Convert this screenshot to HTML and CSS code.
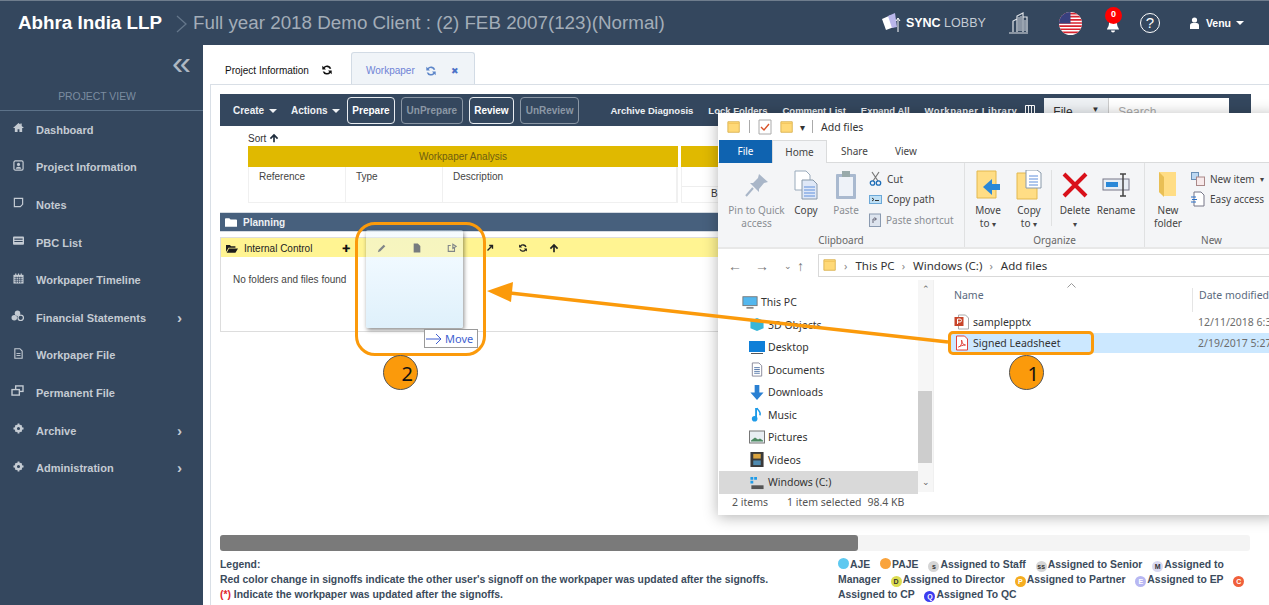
FILE: index.html
```html
<!DOCTYPE html>
<html lang="en">
<head>
<meta charset="utf-8">
<title>Workpaper</title>
<link rel="stylesheet" href="styles.css">
</head>
<body>
<svg width="0" height="0" class="defs">
  <defs>
    <symbol id="i-refresh" viewBox="0 0 12 12"><path d="M10.3 4.6A4.5 4.5 0 0 0 2.6 3L1.3 1.8v3.6h3.6L3.7 4.1a3 3 0 0 1 5 .9zM1.7 7.4a4.5 4.5 0 0 0 7.7 1.6l1.3 1.2V6.6H7.100l1.200 1.300a3 3 0 0 1-5-.5z" fill="currentColor"/></symbol>
    <symbol id="i-up" viewBox="0 0 12 12"><path d="M6 1l5 5-1.400 1.400L7 4.900V11H5V4.900L2.400 7.400 1 6z" fill="currentColor"/></symbol>
    <symbol id="i-gear" viewBox="0 0 12 12"><circle cx="6" cy="6" r="3" fill="none" stroke="currentColor" stroke-width="2.600"/><path d="M5 .5h2v2.500H5zM5 9h2v2.500H5zM.5 5H3v2H.5zM9 5h2.500v2H9zM2 3.400L3.400 2l1.500 1.500-1.400 1.400zM8.600 10L10 8.600 8.500 7.100 7.100 8.500zM10 3.400L8.600 2 7.100 3.500l1.400 1.400zM3.400 10L2 8.600l1.500-1.500 1.400 1.400z" fill="currentColor"/></symbol>
    <symbol id="i-folder" viewBox="0 0 16 16"><path d="M1 2h13v12H1z" fill="#ffd977" stroke="#d9b04e"/><path d="M1 4h13" stroke="#f2c55c"/></symbol>
  </defs>
</svg>

<header class="topbar">
  <span class="brand">Abhra India LLP</span>
  <svg class="crumb" width="14" height="20" viewBox="0 0 14 20"><path d="M2 2l9 8-9 8" fill="none" stroke="#64768a" stroke-width="1.300"/></svg>
  <span class="client">Full year 2018 Demo Client : (2) FEB 2007(123)(Normal)</span>
  <div class="top-tools">
    <svg class="sync-icon" width="24" height="22" viewBox="0 0 24 22"><path d="M1 7l9-4 3 12-8 3z" fill="#fff"/><path d="M7 4l7-3 2 14-5 1z" fill="#b9b6ea"/><path d="M17 20V7m-2 2l2-3 2 3" stroke="#fff" fill="none"/></svg>
    <span class="sync"><b>SYNC</b> LOBBY</span>
    <svg class="building" width="21" height="22" viewBox="0 0 21 22"><path d="M9 20V4l6-3v19M15 5h4v15M5 20V9l4-2M1 21h19" fill="none" stroke="#dfe3e8" stroke-width="1.200"/><path d="M11 5v14M13 4v15M17 8v11" stroke="#dfe3e8"/></svg>
    <svg class="flag" width="23" height="23" viewBox="0 0 22 22"><clipPath id="round"><circle cx="11" cy="11" r="11"/></clipPath><g clip-path="url(#round)"><rect width="22" height="22" fill="#fff"/><path d="M0 1.500h22M0 4.500h22M0 7.500h22M0 10.500h22M0 13.500h22M0 16.500h22M0 19.500h22" stroke="#d8232f" stroke-width="1.600"/><rect width="11" height="11" fill="#38407e"/></g></svg>
    <div class="bell">
      <svg width="14" height="15" viewBox="0 0 14 15"><path d="M7 1a4 4 0 0 1 4 4c0 4 2 5 2 6.500H1C1 10 3 9 3 5a4 4 0 0 1 4-4zM5 12.500h4a2 2 0 0 1-4 0z" fill="#fff"/></svg>
      <span class="badge">0</span>
    </div>
    <span class="help">?</span>
    <svg class="person" width="9" height="12" viewBox="0 0 9 12"><circle cx="4.500" cy="3" r="2.600" fill="#fff"/><path d="M0 12V8.500a2.500 2.500 0 0 1 2.500-2.500h4A2.500 2.500 0 0 1 9 8.500V12z" fill="#fff"/></svg>
    <span class="user">Venu</span>
    <span class="caret user-caret"></span>
  </div>
</header>

<div class="shell">
  <aside class="sidebar">
    <div class="collapse">«</div>
    <div class="side-title">PROJECT VIEW</div>
    <nav class="side-nav">
      <a class="side-item"><svg class="s-ic" viewBox="0 0 12 12"><path d="M6 1L0 6.500h2V11h3V8h2v3h3V6.500h2L9.500 4.300V1.500H8v1.300z" fill="currentColor"/></svg><span>Dashboard</span></a>
      <a class="side-item"><svg class="s-ic" viewBox="0 0 12 12"><rect x="1" y="1" width="10" height="10" rx="1.500" fill="none" stroke="currentColor" stroke-width="1.300"/><circle cx="6" cy="4.800" r="1.700" fill="currentColor"/><path d="M3 9.500c0-3 6-3 6 0z" fill="currentColor"/></svg><span>Project Information</span></a>
      <a class="side-item"><svg class="s-ic" viewBox="0 0 12 12"><path d="M1.500 1.500h9V8L8 10.500H1.500z" fill="none" stroke="currentColor" stroke-width="1.300"/></svg><span>Notes</span></a>
      <a class="side-item"><svg class="s-ic" viewBox="0 0 12 12"><rect x="0" y="1.500" width="12" height="9" rx="1" fill="currentColor"/><path d="M1.500 4.500h9M1.500 7h9" stroke="#34475e" stroke-width="1.100"/></svg><span>PBC List</span></a>
      <a class="side-item"><svg class="s-ic" viewBox="0 0 12 12"><rect x=".5" y="2" width="11" height="9.500" fill="currentColor"/><path d="M3 .5v2M6 .5v2M9 .5v2" stroke="currentColor" stroke-width="1.300"/><path d="M1.500 5h9M1.500 7h9M1.500 9h9M3.500 4v7M6 4v7M8.500 4v7" stroke="#34475e" stroke-width=".7"/></svg><span>Workpaper Timeline</span></a>
      <a class="side-item has-sub"><svg class="s-ic wide" viewBox="0 0 14 12"><circle cx="7" cy="3.500" r="3" fill="currentColor"/><circle cx="3.500" cy="8.500" r="3" fill="currentColor"/><circle cx="10.500" cy="8.500" r="3" fill="none" stroke="currentColor" stroke-width="1.400"/></svg><span>Financial Statements</span><em class="chev">›</em></a>
      <a class="side-item"><svg class="s-ic" viewBox="0 0 12 12"><path d="M2 .8h5.500L10 3.300v7.900H2z" fill="none" stroke="currentColor" stroke-width="1.200"/><path d="M3.800 6h4.400M3.800 8.200h4.400" stroke="currentColor"/></svg><span>Workpaper File</span></a>
      <a class="side-item"><svg class="s-ic wide" viewBox="0 0 14 12"><rect x="5" y="1" width="8" height="6" fill="none" stroke="currentColor" stroke-width="1.500"/><rect x="1" y="5" width="8" height="6" fill="#34475e" stroke="currentColor" stroke-width="1.500"/></svg><span>Permanent File</span></a>
      <a class="side-item has-sub"><svg class="s-ic"><use href="#i-gear"/></svg><span>Archive</span><em class="chev">›</em></a>
      <a class="side-item has-sub"><svg class="s-ic"><use href="#i-gear"/></svg><span>Administration</span><em class="chev">›</em></a>
    </nav>
  </aside>

  <main class="content">
    <div class="tabs">
      <div class="tab">Project Information <svg class="t-ic"><use href="#i-refresh"/></svg></div>
      <div class="tab active">Workpaper <svg class="t-ic"><use href="#i-refresh"/></svg><span class="close">✖</span></div>
    </div>
    <section class="panel">
      <div class="toolbar">
        <span class="tool-link dd">Create <i class="caret"></i></span>
        <span class="tool-link dd">Actions <i class="caret"></i></span>
        <button class="btn">Prepare</button>
        <button class="btn off">UnPrepare</button>
        <button class="btn">Review</button>
        <button class="btn off">UnReview</button>
        <div class="tool-right">
          <span class="tool-link">Archive Diagnosis</span>
          <span class="tool-link">Lock Folders</span>
          <span class="tool-link">Comment List</span>
          <span class="tool-link">Expand All</span>
          <span class="tool-link lib">Workpaper Library</span>
          <svg class="col-ic" width="10" height="10" viewBox="0 0 10 10"><path d="M.5.500h9v9h-9zM3.500.500v9M6.500.500v9" fill="none" stroke="#fff"/></svg>
          <div class="search"><span class="file-sel">File <i>▼</i></span><span class="search-box">Search</span></div>
        </div>
      </div>

      <div class="sort">Sort <svg class="sort-ic"><use href="#i-up"/></svg></div>
      <div class="analysis">
        <div class="a-table main-table">
          <div class="a-head">Workpaper Analysis</div>
          <div class="a-cols">
            <span>Reference</span><span>Type</span><span>Description</span>
          </div>
        </div>
        <div class="a-table side-table">
          <div class="a-head"></div>
          <div class="a-sub"></div>
          <div class="a-sub2">B</div>
        </div>
      </div>

      <div class="planning"><svg class="f-ic" viewBox="0 0 14 12"><path d="M0 2a1 1 0 0 1 1-1h4l1.500 1.500H13a1 1 0 0 1 1 1V11H0z" fill="#fff"/></svg>Planning</div>
      <div class="tree-box">
        <div class="control">
          <svg class="f-ic open" viewBox="0 0 14 12"><path d="M0 2h4.500L6 3.500h5V5H3L0 10zM3.500 6H14l-3 5H.8z" fill="#1d1d1d"/></svg>
          <span class="control-name">Internal Control</span>
          <span class="plus">✚</span>
          <svg class="c-ic" viewBox="0 0 12 12"><path d="M2 8l6-6 2 2-6 6-3 1z" fill="#333"/></svg>
          <svg class="c-ic" viewBox="0 0 12 12"><path d="M2 .5h5l3 3v8H2z" fill="#222"/></svg>
          <svg class="c-ic" viewBox="0 0 12 12"><path d="M9 6v4H1.500V3h3M7 1.500l4 2.500-4 2.500z" fill="none" stroke="#333" stroke-width="1.300"/></svg>
          <svg class="c-ic c-go" viewBox="0 0 12 12"><path d="M3 9l5-5M5 3h4v4" fill="none" stroke="#222" stroke-width="1.600"/></svg>
          <svg class="c-ic c-sync"><use href="#i-refresh"/></svg>
          <svg class="c-ic c-top"><use href="#i-up"/></svg>
        </div>
        <p class="empty">No folders and files found</p>
      </div>

      <div class="spacer"></div>
      <div class="hscroll"><div class="hthumb"></div></div>
      <footer class="legend">
        <div class="legend-text">
          <p>Legend:</p>
          <p>Red color change in signoffs indicate the other user's signoff on the workpaper was updated after the signoffs.</p>
          <p><span class="red">(*)</span> Indicate the workpaper was updated after the signoffs.</p>
        </div>
        <div class="legend-keys">
          <i class="dot aje"></i>AJE <i class="dot paje"></i>PAJE <i class="dot staff">s</i>Assigned to Staff <i class="dot senior">ss</i>Assigned to Senior <i class="dot mgr">M</i>Assigned to Manager <i class="dot dir">D</i>Assigned to Director <i class="dot partner">P</i>Assigned to Partner <i class="dot ep">E</i>Assigned to EP <i class="dot cp">C</i>Assigned to CP <i class="dot qc">Q</i>Assigned To QC
        </div>
      </footer>
    </section>
  </main>
</div>

<div class="explorer">
  <div class="ex-title">
    <svg class="ex-ic"><use href="#i-folder"/></svg>
    <i class="ex-sep"></i>
    <svg class="ex-ic" viewBox="0 0 14 16"><path d="M1 1h12v14H1z" fill="#fff" stroke="#aaa"/><path d="M3 8l3 3 5-6" fill="none" stroke="#d9542b" stroke-width="1.400"/></svg>
    <svg class="ex-ic"><use href="#i-folder"/></svg>
    <span class="ex-down">▾</span>
    <i class="ex-sep"></i>
    <span>Add files</span>
  </div>
  <div class="ex-tabs">
    <span class="ex-tab file">File</span><span class="ex-tab home">Home</span><span class="ex-tab">Share</span><span class="ex-tab">View</span>
  </div>
  <div class="ribbon">
    <div class="r-group clip">
      <div class="r-items">
        <div class="r-big pin dim"><svg width="26" height="26" viewBox="0 0 26 26"><path d="M15 2l9 8-4 1-5 6 0 3-9-9 3 0 5-5z" fill="#a9b6c8"/><path d="M9 16l-7 8" stroke="#a9b6c8" stroke-width="2"/></svg><span>Pin to Quick access</span></div>
        <div class="r-big copy"><svg width="26" height="30" viewBox="0 0 26 30"><path d="M2 1h11l4 4v15H2z" fill="#fff" stroke="#9ab"/><path d="M9 10h11l4 4v15H9z" fill="#dfe8f7" stroke="#89a"/><path d="M11 17h11M11 20h11M11 23h11M11 26h11" stroke="#5f8fdc"/></svg><span>Copy</span></div>
        <div class="r-big paste dim"><svg width="22" height="30" viewBox="0 0 22 30"><rect x="1" y="4" width="20" height="25" rx="1" fill="#a9b9cf"/><rect x="4" y="7" width="14" height="19" fill="#eef2f8"/><rect x="7" y="1" width="8" height="6" fill="#9aa"/></svg><span>Paste</span></div>
        <div class="r-small-col">
          <div class="r-small"><svg width="13" height="15" viewBox="0 0 13 15"><path d="M3 1l6 9M10 1L4 10" stroke="#777" stroke-width="1.200"/><circle cx="3.500" cy="12" r="2.200" fill="none" stroke="#1f6fb8" stroke-width="1.300"/><circle cx="9.500" cy="12" r="2.200" fill="none" stroke="#1f6fb8" stroke-width="1.300"/></svg>Cut</div>
          <div class="r-small"><svg width="13" height="9" viewBox="0 0 13 9"><rect x=".5" y=".5" width="12" height="8" fill="#bfe0f5" stroke="#6ba8d8"/><path d="M3 3l2 1.500L3 6M6 5.500h4" stroke="#333" fill="none"/></svg>Copy path</div>
          <div class="r-small dim"><svg width="12" height="15" viewBox="0 0 12 15"><rect x=".5" y="2" width="11" height="12.500" fill="#dde4ee" stroke="#8a9ab0"/><path d="M4 11V7h3M5.500 5.500L7.500 7l-2 1.500" stroke="#667" fill="none"/></svg>Paste shortcut</div>
        </div>
      </div>
      <div class="r-label">Clipboard</div>
    </div>
    <div class="r-group org">
      <div class="r-items">
        <div class="r-big move"><svg width="26" height="30" viewBox="0 0 26 30"><path d="M2 1h19v27H2z" fill="#ffdd85" stroke="#e3b84f"/><path d="M25 14v6h-8v5l-9-8 9-8v5z" fill="#2a88d8"/></svg><span>Move<br>to <i class="mini">▾</i></span></div>
        <div class="r-big cop"><svg width="26" height="30" viewBox="0 0 26 30"><path d="M1 3h20v26H1z" fill="#ffdd85" stroke="#e3b84f"/><path d="M10 0h11l4 3v15H10z" fill="#fff" stroke="#89a"/><path d="M13 6h9M13 9h9M13 12h9M13 15h9" stroke="#5f8fdc"/></svg><span>Copy<br>to <i class="mini">▾</i></span></div>
        <i class="r-div"></i>
        <div class="r-big del"><svg width="26" height="26" viewBox="0 0 26 26"><path d="M2 2l22 22M24 2L2 24" stroke="#d9101a" stroke-width="4"/></svg><span>Delete<br><i class="mini">▾</i></span></div>
        <div class="r-big ren"><svg width="28" height="26" viewBox="0 0 28 26"><rect x="1" y="7" width="26" height="11" fill="#e8eef5" stroke="#778"/><rect x="4" y="10" width="12" height="5" fill="#2a88d8"/><path d="M21 2v22M18 2h6M18 24h6" stroke="#444" stroke-width="1.500"/></svg><span>Rename</span></div>
      </div>
      <div class="r-label">Organize</div>
    </div>
    <div class="r-group new">
      <div class="r-items">
        <div class="r-big nf"><svg width="20" height="28" viewBox="0 0 20 28"><path d="M1 1h17v24H6l-5-4z" fill="#ffdd85"/><path d="M1 1l5 5v20l-5-5z" fill="#e9bf55"/></svg><span>New<br>folder</span></div>
        <div class="r-small-col">
          <div class="r-small"><svg width="14" height="14" viewBox="0 0 14 14"><rect x=".5" y=".5" width="7" height="7" fill="#bcd8f2" stroke="#6a8fb5"/><rect x="5.500" y="5" width="8" height="8.500" fill="#f7e9ea" stroke="#a88"/></svg>New item <i class="mini">▾</i></div>
          <div class="r-small"><svg width="14" height="16" viewBox="0 0 14 16"><path d="M3 1h7l3 3v11H3z" fill="#fff" stroke="#778"/><path d="M0 6h5M1 8.500h5M0 11h5" stroke="#2a70c8"/></svg>Easy access <i class="mini">▾</i></div>
        </div>
      </div>
      <div class="r-label">New</div>
    </div>
  </div>
  <div class="ex-addr">
    <span class="nav-ic">←</span><span class="nav-ic">→</span><span class="nav-ic tiny">⌄</span><span class="nav-ic">↑</span>
    <div class="addr-box">
      <svg class="ex-ic"><use href="#i-folder"/></svg>
      <span class="gt">›</span>This PC<span class="gt">›</span>Windows (C:)<span class="gt">›</span>Add files
    </div>
  </div>
  <div class="ex-body">
    <div class="ex-tree">
      <div class="t-row pc"><svg width="18" height="15" viewBox="0 0 18 15"><rect x="1" y="1" width="16" height="10" fill="#53b7ee" stroke="#777"/><path d="M5 13.500h8" stroke="#888" stroke-width="2"/></svg>This PC</div>
      <div class="t-row"><svg width="16" height="16" viewBox="0 0 16 16"><path d="M8 1l7 3v8l-7 3-7-3V4z" fill="#37b6d8"/></svg>3D Objects</div>
      <div class="t-row"><svg width="16" height="13" viewBox="0 0 16 13"><rect width="16" height="11" fill="#0f7fd8"/><path d="M2 12.500h12" stroke="#555"/></svg>Desktop</div>
      <div class="t-row"><svg width="16" height="16" viewBox="0 0 16 16"><path d="M3 1h7l3 3v11H3z" fill="#fff" stroke="#889"/><path d="M5 6h6M5 8h6M5 10h6M5 12h6" stroke="#57a"/></svg>Documents</div>
      <div class="t-row"><svg width="16" height="16" viewBox="0 0 16 16"><path d="M5.500 0h5v8H15l-7 8-7-8h4.500z" fill="#2a80d2"/></svg>Downloads</div>
      <div class="t-row"><svg width="16" height="16" viewBox="0 0 16 16"><path d="M7 1v11" stroke="#1e9be8" stroke-width="2"/><circle cx="5.500" cy="12.500" r="3" fill="#1e9be8"/><path d="M8 1c1 3 5 4 3 8" stroke="#1e9be8" fill="none" stroke-width="1.500"/></svg>Music</div>
      <div class="t-row"><svg width="16" height="14" viewBox="0 0 16 14"><rect x=".5" y=".5" width="15" height="12" fill="#e9eef3" stroke="#777"/><path d="M2 10l4-3 3 2 2-1 3 2v1H2z" fill="#4e8a63"/></svg>Pictures</div>
      <div class="t-row"><svg width="14" height="16" viewBox="0 0 14 16"><rect width="14" height="16" fill="#3a3a3a"/><rect x="3" y="2" width="8" height="5" fill="#d9a33e"/><rect x="3" y="9" width="8" height="5" fill="#4e8ab0"/></svg>Videos</div>
      <div class="t-row sel"><svg width="16" height="16" viewBox="0 0 16 16"><path d="M1 2h3v3H1zM5 2h3v3H5zM1 6h3v3H1z" fill="#1e9be8"/><rect x="2" y="11" width="13" height="4" fill="#555"/></svg>Windows (C:)</div>
    </div>
    <div class="ex-scroll"><span class="sc-a">⌃</span><div class="sc-thumb"></div><span class="sc-a">⌄</span></div>
    <div class="ex-list">
      <div class="l-head"><span class="l-name">Name<svg class="sort-mark" width="9" height="5" viewBox="0 0 9 5"><path d="M.5 4.500l4-4 4 4" fill="none" stroke="#999"/></svg></span><span class="l-date">Date modified</span></div>
      <div class="l-row"><svg width="15" height="16" viewBox="0 0 15 16"><path d="M4 1h7l3 3v11H4z" fill="#fff" stroke="#aaa"/><rect y="3" width="9" height="9" fill="#c8452a"/><path d="M3 10V5h2.500a1.300 1.300 0 0 1 0 3H3" fill="none" stroke="#fff"/></svg><span class="l-name-t">samplepptx</span><span class="l-d">12/11/2018 6:37</span></div>
      <div class="l-row picked"><svg width="13" height="16" viewBox="0 0 13 16"><path d="M1 1h8l3 3v11H1z" fill="#fff" stroke="#e0413a"/><path d="M3 12c3-1 4-5 3-7 0 3 2 5 4 5-3 0-5 1-7 2z" fill="none" stroke="#e0413a"/></svg><span class="l-name-t">Signed Leadsheet</span><span class="l-d">2/19/2017 5:27</span></div>
    </div>
  </div>
  <div class="ex-status"><span>2 items</span><span class="st-sel">1 item selected</span><span>98.4 KB</span></div>
</div>

<div class="ghost"></div>
<div class="move-tag"><svg width="16" height="12" viewBox="0 0 16 12"><path d="M0 6h15M10 1l5 5-5 5" fill="none" stroke="#3f5fd0"/></svg>Move</div>
<div class="callout box-two"></div>
<div class="callout box-one"></div>
<svg class="arrow" width="1269" height="605" viewBox="0 0 1269 605">
  <path d="M948 342L510 293" fill="none" stroke="#fb9a0b" stroke-width="3.500"/>
  <path d="M487 291l26-9-2 20z" fill="#fb9a0b"/>
</svg>
<div class="step step-one">1</div>
<div class="step step-two">2</div>
</body>
</html>
```

FILE: styles.css
```css
* { box-sizing: border-box; }
html, body { margin: 0; height: 100%; }
body {
  width: 1269px; height: 605px; overflow: hidden; position: relative;
  display: flex; flex-direction: column;
  font-family: "Liberation Sans", Arial, sans-serif; background: #fff;
}
.defs { position: absolute; }
p { margin: 0; }

.topbar {
  height: 45px; flex: none; display: flex; align-items: center;
  padding-left: 18px; background: #34475e; border-top: 1px solid #6f7d8d;
}
.brand { color: #fff; font-size: 18.800px; font-weight: 700; white-space: nowrap; }
.crumb { margin: 2px 4px 0 13px; flex: none; }
.client { color: #a3adb8; font-size: 18.800px; white-space: nowrap; }
.top-tools { margin-left: auto; display: flex; align-items: center; color: #fff; padding-right: 25px; }
.sync-icon { margin-right: 1px; }
.sync { font-size: 12.500px; color: #c5ccd5; width: 80px; white-space: nowrap; }
.sync b { color: #fff; font-weight: 700; }
.building { margin-left: 22px; }
.flag { margin-left: 30px; }
.bell { position: relative; margin-left: 24px; width: 14px; height: 15px; }
.bell svg { display: block; margin-top: 2px; }
.badge {
  position: absolute; left: -1px; top: -9px; width: 17px; height: 17px; border-radius: 50%;
  background: #f00; color: #fff; font-size: 9px; font-weight: 700; text-align: center; line-height: 15px;
}
.help {
  margin-left: 20px; width: 20px; height: 20px; border: 1.500px solid #fff; border-radius: 50%;
  font-size: 15px; line-height: 18px; text-align: center;
}
.person { margin-left: 30px; margin-right: 7px; }
.user { font-size: 10.500px; font-weight: 700; }
.caret { display: inline-block; width: 0; height: 0; border: 4px solid transparent; border-top-color: currentColor; border-bottom: 0; vertical-align: middle; }
.user-caret { margin-left: 5px; }

.shell { flex: 1; display: flex; min-height: 0; }
.sidebar { width: 203px; flex: none; background: #34475e; color: #c4cbd3; }
.collapse { height: 30px; margin-top: 2px; padding-right: 12px; text-align: right; font-size: 34px; line-height: 30px; color: #aeb8c3; font-weight: 400; }
.side-title { height: 34px; padding: 14px 9px 0 0; text-align: center; font-size: 10.400px; color: #7b8ca0; border-bottom: 1px solid #5c7289; }
.side-item { height: 37.600px; display: flex; align-items: center; padding-left: 13px; font-size: 11px; font-weight: 700; }
.s-ic { width: 11px; height: 11px; margin-right: 12px; flex: none; margin-top: -4px; color: #c4cbd3; }
.s-ic.wide { width: 13px; margin-left: -2px; }
.side-item span { white-space: nowrap; }
.chev { font-style: normal; margin-left: auto; margin-right: 21px; font-size: 15px; line-height: 12px; }

.content { flex: 1; min-width: 0; padding: 7px 18px 0 7px; display: flex; flex-direction: column; }
.tabs { height: 32px; flex: none; display: flex; position: relative; z-index: 1; }
.tab { display: flex; align-items: center; font-size: 10px; color: #111; padding: 4px 15px 0; width: 141px; gap: 12px; white-space: nowrap; }
.tab.active { width: 124px; color: #6f83d6; background: #f0f4f8; border: 1px solid #d2dbe5; border-bottom: 0; border-radius: 3px 3px 0 0; padding-left: 14px; gap: 10px; }
.t-ic { width: 12px; height: 12px; flex: none; }
.tab.active .t-ic { color: #5d86c9; }
.close { color: #4d72c8; font-size: 9px; margin-left: 4px; }

.panel { flex: 1; min-height: 0; border: 1px solid #d9dfe6; border-bottom: 0; border-right: 0; padding: 9px 0 0 9px; display: flex; flex-direction: column; margin-right: -18px; }
.toolbar { height: 32px; width: 1031px; flex: none; background: #34475e; display: flex; align-items: center; padding-left: 13px; color: #fff; font-size: 10px; }
.tool-link { font-weight: 700; white-space: nowrap; color: #eef1f4; }
.tool-link.dd { margin-right: 14px; }
.tool-link.dd + .tool-link.dd { margin-right: 7px; }
.tool-link.dd .caret { margin-left: 2px; }
.tool-link.lib { letter-spacing: .5px; }
.btn {
  font: 700 10px "Liberation Sans", Arial, sans-serif; color: #fff; background: transparent;
  border: 1.500px solid #e8ecf0; border-radius: 4px; height: 27px; padding: 0 4px; margin-right: 6px; white-space: nowrap;
}
.btn.off { color: #8b97a5; border-color: #8a96a4; padding: 0 5px; }
.tool-right { margin-left: 25px; display: flex; align-items: center; gap: 15px; flex: 1; min-width: 0; padding-right: 24px; font-size: 9.500px; }
.col-ic { margin: 0 -6px 0 -7px; flex: none; }
.search { display: flex; margin-left: auto; height: 28px; margin-top: 4px; align-self: flex-start; flex: none; }
.file-sel { width: 65px; background: #eef1f4; color: #333; padding: 7px 9px; font-size: 12px; display: flex; justify-content: space-between; border-right: 1px solid #ccc; }
.file-sel i { font-style: normal; font-size: 8px; }
.search-box { width: 120px; background: #fff; color: #aaa; padding: 7px 9px; font-size: 12px; }

.sort { height: 20px; flex: none; padding: 7px 0 0 28px; font-size: 10px; color: #333; }
.sort-ic { width: 10px; height: 10px; vertical-align: -1px; color: #1f2d3d; }
.analysis { display: flex; gap: 3px; margin-left: 28px; height: 57px; flex: none; }
.a-table { border: 1px solid #f0f0f0; border-top: 0; }
.main-table { width: 430px; }
.side-table { flex: 1; }
.a-head { height: 21px; background: #e0b900; color: #6e5d10; font-size: 10px; text-align: center; line-height: 21px; margin: 0 -1px; }
.a-cols { display: grid; grid-template-columns: 97px 97px 1fr; height: 35px; font-size: 10px; color: #444; }
.a-cols span { padding: 4px 0 0 10px; border-right: 1px solid #f0f0f0; }
.a-sub { height: 20px; border-bottom: 1px solid #eee; }
.a-sub2 { font-size: 10px; color: #333; padding: 1px 0 0 29px; }

.planning { margin-top: 9px; height: 20px; flex: none; display: flex; align-items: center; background: #47607d; color: #eef1f4; font-size: 10px; font-weight: 700; padding-left: 5px; gap: 6px; border: 1px solid #d5dbe2; border-width: 1px 0; }
.f-ic { width: 12px; height: 11px; flex: none; }
.tree-box { margin-top: 5px; height: 95px; flex: none; border: 1px solid #ddd; }
.control { height: 19px; background: #fff492; display: flex; align-items: center; padding: 1px 0 0 5px; font-size: 10px; color: #222; }
.control-name { margin-left: 6px; width: 98px; white-space: nowrap; }
.plus { width: 10px; font-size: 10px; color: #111; }
.c-ic { width: 10px; height: 10px; margin-left: 25px; flex: none; color: #222; }
.c-ic.c-go { margin-left: 28px; }
.c-ic.c-sync { margin-left: 23px; }
.c-ic.c-top { margin-left: 21px; }
.empty { font-size: 10px; color: #444; padding: 17px 0 0 12px; }

.spacer { flex: 1; }
.hscroll { height: 16px; width: 1030px; flex: none; background: #f4f4f4; border-radius: 3px; }
.hthumb { width: 638px; height: 100%; background: #7a7a7a; border-radius: 3px; }
.legend { display: flex; height: 54px; flex: none; padding-top: 6px; font-size: 10.400px; line-height: 15px; color: #3b4b5c; font-weight: 700; }
.legend-text { width: 618px; flex: none; }
.legend-text .red { color: #e0242c; }
.legend-keys { width: 412px; }
.dot { display: inline-block; width: 11px; height: 11px; border-radius: 50%; font-style: normal; font-size: 7px; line-height: 11px; text-align: center; color: #333; vertical-align: -1px; margin-left: 7px; margin-right: 1px; }
.legend-keys .dot:first-child { margin-left: 0; }
.aje { background: #5ec9f0; }
.paje { background: #f9a33c; }
.staff, .senior { background: #d5d5d5; }
.mgr { background: #d8d8f0; }
.dir { background: #dcdc50; }
.partner { background: #f5ad20; color: #fff; }
.ep { background: #b7b7f2; color: #fff; }
.cp { background: #f0603a; color: #fff; }
.qc { background: #3c3cf0; color: #fff; }

/* Explorer window floats over the page */
.explorer {
  position: absolute; left: 718px; top: 113px; width: 560px; height: 402px;
  display: flex; flex-direction: column; background: #fff;
  box-shadow: 0 2px 14px rgba(0,0,0,.3);
  font-family: "Noto Sans", sans-serif; font-size: 10px; color: #333;
}
.ex-title { height: 27px; flex: none; display: flex; align-items: center; padding-left: 9px; gap: 8px; color: #333; font-size: 10.500px; }
.ex-ic { width: 14px; height: 16px; flex: none; }
.ex-sep { width: 1px; height: 13px; background: #aaa; }
.ex-down { margin: 0 -1px 0 -2px; font-size: 10px; }
.ex-tabs { height: 23px; flex: none; display: flex; border-bottom: 1px solid #dadbdc; font-size: 10px; color: #444; padding-left: 1px; }
.ex-tab { padding: 3px 15px 0; height: 23px; }
.ex-tab.file { width: 53px; background: #0f63b0; color: #fff; padding: 4px 0 0; text-align: center; }
.ex-tab.home { width: 55px; text-align: center; padding: 4px 0 0; background: #f4f5f7; border: 1px solid #dadbdc; border-bottom: 0; position: relative; z-index: 1; }
.ex-tabs .ex-tab:nth-child(3) { padding: 4px 0 0 14px; width: 56px; }
.ex-tabs .ex-tab:nth-child(4) { padding: 4px 0 0 12px; }
.ribbon { height: 86px; flex: none; display: flex; background: #f4f5f7; border-bottom: 2px solid #e8e8e8; }
.r-group { display: flex; flex-direction: column; border-right: 1px solid #e0e1e2; }
.r-group.clip { width: 247px; }
.r-group.org { width: 180px; }
.r-group.new { flex: 1; border-right: 0; }
.r-items { flex: 1; display: flex; padding-top: 7px; }
.r-label { height: 14px; text-align: center; color: #666; line-height: 14px; }
.r-big { display: flex; flex-direction: column; align-items: center; text-align: center; line-height: 13px; color: #444; }
.r-big svg { height: 30px; margin-bottom: 4px; }
.r-big.dim, .r-small.dim { color: #8a8e93; }
.pin { width: 69px; padding-left: 8px; }
.copy { width: 38px; }
.paste { width: 38px; margin-left: 2px; }
.r-small-col { display: flex; flex-direction: column; gap: 3.500px; margin-left: 4px; }
.r-small { height: 17px; display: flex; align-items: center; gap: 5px; white-space: nowrap; color: #444; }
.r-small svg { flex: none; }
.move { width: 40px; margin-left: 3px; }
.cop { width: 40px; margin-left: 1px; }
.r-div { width: 1px; height: 56px; background: #e0e1e2; margin-left: 2px; }
.del { width: 40px; margin-left: 3px; }
.ren { width: 42px; }
.nf { width: 44px; margin-left: 1px; }
.new .r-small-col { margin-left: 1px; }
.mini { font-style: normal; font-size: 8px; }
.ex-addr { height: 31px; flex: none; display: flex; align-items: center; padding: 1px 0 0 10px; color: #555; }
.nav-ic { width: 27px; font-size: 14px; color: #777; }
.nav-ic.tiny { width: 18px; font-size: 9px; text-align: center; margin-left: -3px; }
.addr-box { margin-left: -6px; flex: 1; height: 23px; border: 1px solid #d9d9d9; display: flex; align-items: center; padding-left: 4px; font-size: 11.500px; color: #333; white-space: nowrap; }
.gt { color: #888; margin: 0 8px 0 7px; font-size: 11px; }
.ex-body { flex: 1; display: flex; min-height: 0; }
.ex-tree { width: 200px; padding: 11px 0 0 1px; flex: none; }
.t-row { height: 22.500px; display: flex; align-items: center; padding-left: 30px; gap: 3px; font-size: 10.500px; white-space: nowrap; }
.t-row svg { flex: none; width: 16px; height: 15px; }
.t-row.pc { padding-left: 23px; }
.t-row.sel { background: #d9d9d9; }
.ex-scroll { width: 15px; flex: none; display: flex; flex-direction: column; background: #f6f6f6; color: #666; text-align: center; font-size: 9px; padding-top: 3px; }
.sc-a { height: 12px; line-height: 12px; }
.sc-thumb { width: 14px; height: 72px; margin-top: 96px; margin-bottom: 13px; background: #cdcdcd; }
.ex-list { flex: 1; padding-left: 17px; border-left: 1px solid #f0f0f0; }
.l-head { height: 32px; display: flex; color: #5a6a7e; padding: 8px 0 0 3px; font-size: 10.500px; }
.l-name { width: 239px; border-right: 1px solid #e5e5e5; height: 24px; position: relative; }
.sort-mark { position: absolute; left: 113px; top: -5px; }
.l-date { padding-left: 6px; white-space: nowrap; }
.l-row { height: 20.500px; display: flex; align-items: center; padding-left: 3px; font-size: 10.500px; gap: 3px; white-space: nowrap; }
.l-row svg { width: 16px; flex: none; }
.l-name-t { width: 222px; }
.l-d { color: #6d6d6d; }
.l-row.picked { background: #cce8ff; }
.ex-status { height: 23px; flex: none; display: flex; align-items: center; padding: 0 0 3px 14px; gap: 6px; font-size: 10.500px; color: #555; }
.st-sel { margin-left: 13px; }

/* Annotations painted on top of the screenshot */
.ghost {
  position: absolute; left: 366px; top: 230px; width: 97px; height: 98px; border-radius: 2px;
  background: linear-gradient(rgba(232,245,253,.42), rgba(236,247,254,.42) 27.500%, rgba(240,249,255,.98) 28%, rgba(222,240,251,.98));
  box-shadow: 1px 2px 4px rgba(0,0,0,.45);
}
.move-tag {
  position: absolute; left: 424px; top: 329px; width: 54px; height: 19px; display: flex; align-items: center; gap: 3px; padding-left: 1px;
  background: #fff; border: 1px solid #9a9a9a; color: #3f5fd0; font: 11px "Noto Sans", sans-serif;
}
.callout { position: absolute; border: 3.500px solid #fb9a0b; }
.box-two { left: 355px; top: 222px; width: 131px; height: 134px; border-radius: 20px; }
.box-one { left: 948px; top: 331px; width: 146px; height: 24px; border-radius: 5px; }
.arrow { position: absolute; left: 0; top: 0; pointer-events: none; }
.step {
  position: absolute; width: 35px; height: 35px; border-radius: 50%; background: #fb9a0b; border: 1px solid #555;
  font: 20px/35px "Noto Sans", sans-serif; color: #111; text-align: right; padding-right: 4px;
}
.step-one { left: 1009px; top: 355px; }
.step-two { left: 383px; top: 355px; }
```
